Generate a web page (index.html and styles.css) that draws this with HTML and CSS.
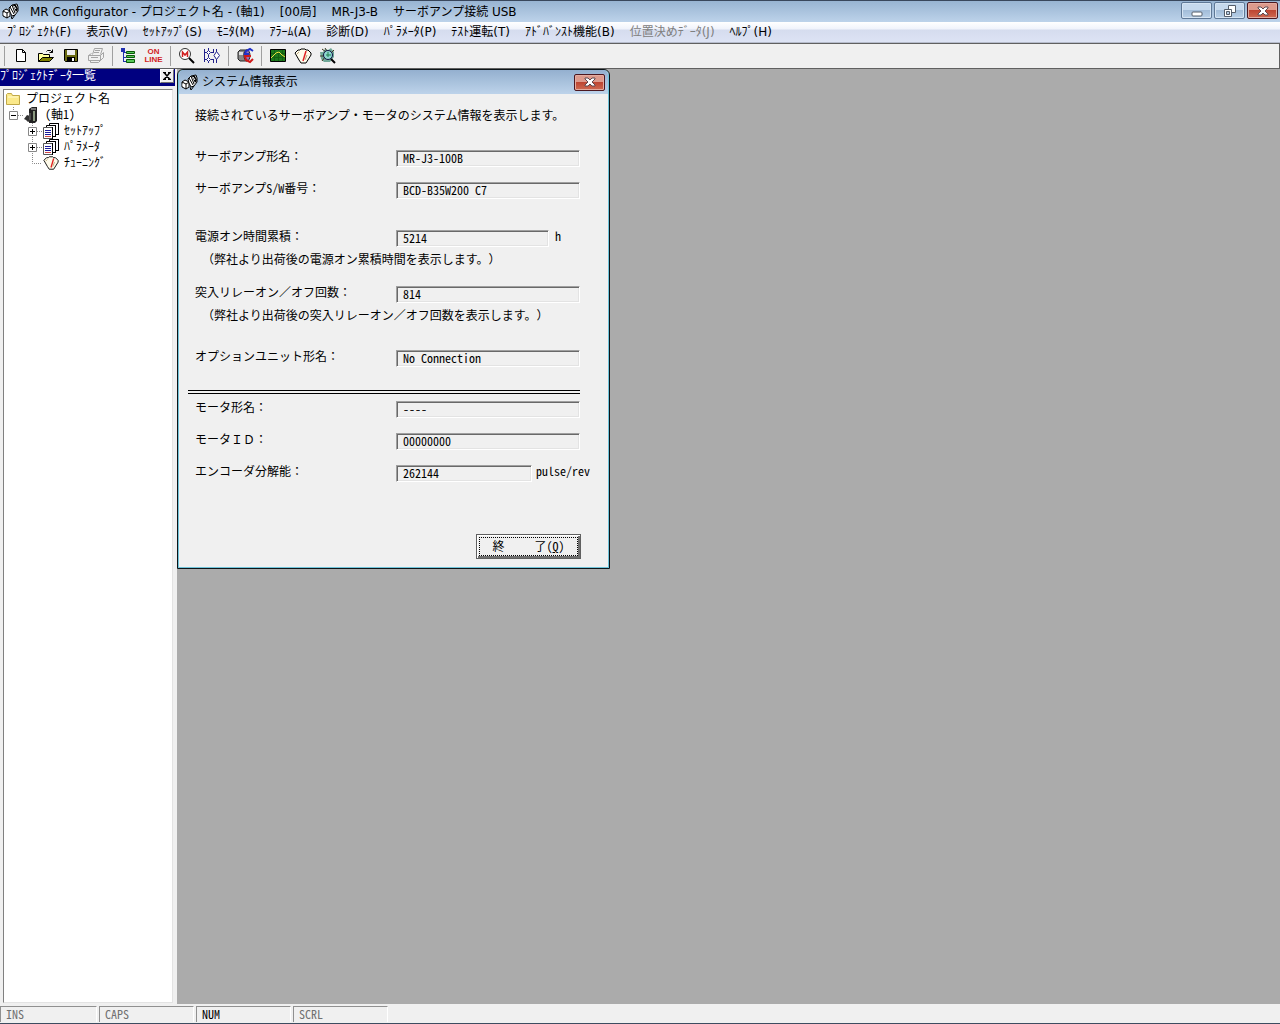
FILE: index.html
```html
<!DOCTYPE html>
<html lang="ja">
<head>
    <meta charset="UTF-8">
    <meta name="viewport" content="width=device-width, initial-scale=1.0">
    <title>MR Configurator</title>
    <link rel="stylesheet" href="styles.css">
</head>
<body>
    <!-- Shared icons -->
    <svg class="defs" width="0" height="0">
        <symbol id="app" viewBox="0 0 17 17">
            <path d="M1 8l3-2 4 2v5l-3 2-4-2z" fill="#fff" stroke="#000"/>
            <path d="M1 8l4 2 3-2M5 10v5" fill="none" stroke="#000"/>
            <path d="M7 5l3-3 5-1 1 3v4l-3 4-3 1-2-4z" fill="#fff" stroke="#000"/>
            <path d="M8 4l4 7M10 2l3 8M13 2l2 6M9 13l1 3 3-4" fill="none" stroke="#000"/>
            <path d="M11 2h3l2 4-2 3z" fill="#000"/>
            <path d="M12 3l2 3M2 10v2" stroke="#fff"/>
        </symbol>
        <symbol id="close" viewBox="0 0 12 10">
            <path d="M1 1h3l2 2 2-2h3v1L8 5l3 3v1H8L6 7 4 9H1V8l3-3-3-3z" fill="#fff" stroke="#5f4a50"/>
        </symbol>
        <symbol id="gauge" viewBox="0 0 18 16">
            <path d="M1 5l3-3h2l1-1h4l1 1h2l3 3v2l-5 8H7L5 12z" fill="#fffbea" stroke="#000"/>
            <path d="M12 3L9 13" stroke="#e02020" stroke-width="1.5"/>
            <path d="M3 6l2-2M13 7l-2 5" stroke="#b9a77a"/>
        </symbol>
        <symbol id="pages" viewBox="0 0 16 16">
            <path d="M6.500.5h9v11h-9z" fill="#fff" stroke="#000"/>
            <path d="M3.500 2.500h9v11h-9z" fill="#fff" stroke="#000"/>
            <path d="M.5 4.500h9v11h-9z" fill="#fff" stroke="#555"/>
            <path d="M9.500 4v12M12.500 2v12M15.500 0v12" stroke="#000"/>
            <path d="M2 7.500h6M2 9.500h6M2 11.500h6" stroke="#1c1c9c"/>
            <path d="M2 13.500h6" stroke="#d04848"/>
        </symbol>
        <symbol id="plus" viewBox="0 0 18 16">
            <path d="M8.500 0v16M13 8.500h5" stroke="#888" stroke-dasharray="1 1"/>
            <path d="M4.500 4.500h8v8h-8z" fill="#fff" stroke="#888"/>
            <path d="M6 8.500h5M8.500 6v5" stroke="#000"/>
        </symbol>
        <symbol id="minus" viewBox="0 0 18 16">
            <path d="M8.500 0v4M13 8.500h5" stroke="#888" stroke-dasharray="1 1"/>
            <path d="M4.500 4.500h8v8h-8z" fill="#fff" stroke="#888"/>
            <path d="M6 8.500h5" stroke="#000"/>
        </symbol>
    </svg>

    <header class="titlebar">
        <svg class="app-icon"><use href="#app"/></svg>
        <h1>
            <span>MR Configurator - プロジェクト名 - (軸1)</span>
            <span>[00局]</span>
            <span>MR-J3-B</span>
            <span>サーボアンプ接続 USB</span>
        </h1>
        <div class="window-buttons">
            <button class="win-btn" aria-label="最小化">
                <svg width="12" height="12"><rect x="1" y="7" width="10" height="4" rx="1" fill="#fff" stroke="#555e6b"/></svg>
            </button>
            <button class="win-btn" aria-label="元に戻す">
                <svg width="12" height="12"><path d="M4.500.5h7v7h-7z" fill="#fff" stroke="#555e6b"/><path d="M.5 4.500h7v7h-7z" fill="#fff" stroke="#555e6b"/><path d="M2.500 6.500h3v3h-3z" fill="#b5cbe2" stroke="#555e6b"/></svg>
            </button>
            <button class="win-btn win-close" aria-label="閉じる">
                <svg width="12" height="10"><use href="#close"/></svg>
            </button>
        </div>
    </header>

    <nav class="menubar">
        <button>ﾌﾟﾛｼﾞｪｸﾄ(F)</button>
        <button>表示(V)</button>
        <button>ｾｯﾄｱｯﾌﾟ(S)</button>
        <button>ﾓﾆﾀ(M)</button>
        <button>ｱﾗｰﾑ(A)</button>
        <button>診断(D)</button>
        <button>ﾊﾟﾗﾒｰﾀ(P)</button>
        <button>ﾃｽﾄ運転(T)</button>
        <button>ｱﾄﾞﾊﾞﾝｽﾄ機能(B)</button>
        <button disabled>位置決めﾃﾞｰﾀ(J)</button>
        <button>ﾍﾙﾌﾟ(H)</button>
    </nav>

    <div class="toolbar">
        <div class="tool-group">
            <button aria-label="新規作成">
                <svg width="18" height="18"><path d="M4.500 2.500h6l3 3v9h-9z" fill="#fff" stroke="#000"/><path d="M10.500 2.500v3h3" fill="none" stroke="#000"/></svg>
            </button>
            <button aria-label="開く">
                <svg width="18" height="18"><path d="M1.500 14.500v-8h4l1 1h6v3" fill="#ffff9c" stroke="#000"/><path d="M1.500 14.500l4-4h11l-4 4z" fill="#808000" stroke="#000"/><path d="M9.500 4.500l1-1h3l2 2M15.500 2.500v3h-3" fill="none" stroke="#000"/></svg>
            </button>
            <button aria-label="保存">
                <svg width="18" height="18"><path d="M2.500 2.500h13v12h-12l-1-1z" fill="#6b6b12" stroke="#000"/><path d="M5 3h8v5H5z" fill="#eee"/><path d="M5 10h8v5H5z" fill="#000"/><path d="M10 11h2v3h-2z" fill="#fff"/></svg>
            </button>
            <button aria-label="印刷" disabled>
                <svg width="18" height="18"><path d="M5.500 7.500l2-6h8l-2 6M1.500 8.500l3-2M1.500 8.500h12v5h-12zM13.500 8.500l3-3v5l-3 3M3.500 13.500v2h8l2-2M8 3.500h5M7 5.500h5M4 10.500h7" fill="none" stroke="#a4a4a4"/></svg>
            </button>
        </div>
        <div class="tool-group">
            <button aria-label="ツリー表示">
                <svg width="18" height="18"><path d="M1 1h4v4H1z" fill="#2030b0"/><path d="M3.500 4v11M3 5.500h3M3 10.500h3M3 14.500h3" fill="none" stroke="#2030b0"/><path d="M6.500 4.500h8v2h-8zM6.500 8.500h8v2h-8zM6.500 12.500h8v3h-8z" fill="#58c858" stroke="#085808"/></svg>
            </button>
            <button class="online">ON<br>LINE</button>
        </div>
        <div class="tool-group">
            <button aria-label="モデル検索">
                <svg width="18" height="18"><circle cx="7" cy="7" r="5.500" fill="#fff" stroke="#333"/><path d="M4.500 10V5L7 8l2.500-3v5" fill="none" stroke="#d02020" stroke-width="1.500"/><path d="M11 11l5 5" stroke="#000" stroke-width="2"/></svg>
            </button>
            <button aria-label="パラメータ設定">
                <svg width="18" height="18"><path d="M1.500 2v13M5.500 1v3M5.500 8v2M5.500 14v2M1 5.500h3M1 12.500h3M8 5.500h2M8 12.500h2M10.500 2v4M10.500 12v4M13.500 2v3M13.500 12v4" fill="none" stroke="#20208c"/><path d="M3.500 5.500l2-2 2 2-2 2zM3.500 12.500l2-2 2 2-2 2zM11 8.500l2.500-4 3 4-3 4z" fill="#fff" stroke="#20208c"/></svg>
            </button>
        </div>
        <div class="tool-group">
            <button aria-label="テスト運転">
                <svg width="18" height="18"><path d="M2 5l2-2h7v11H4l-2-2z" fill="#888" stroke="#222"/><path d="M3 5h4v3H3z" fill="#ddd"/><ellipse cx="11" cy="8.500" rx="3" ry="5.500" fill="#9a70b8" stroke="#222"/><path d="M17 4l-3-2-4 2-1 3h4" fill="none" stroke="#2030c8" stroke-width="2"/><path d="M17 12l-3 3-4-2-1-4h6" fill="none" stroke="#d01818" stroke-width="2"/></svg>
            </button>
        </div>
        <div class="tool-group">
            <button aria-label="グラフ">
                <svg width="18" height="18"><path d="M1.500 2.500h15v12h-15z" fill="#1c781c" stroke="#000"/><path d="M5.500 3v11M9.500 3v11M13.500 3v11M2 6.500h14M2 10.500h14" stroke="#126012"/><path d="M2 11l5-5 3-1 3 3 3 2" fill="none" stroke="#f0e040"/></svg>
            </button>
            <button aria-label="チューニング">
                <svg width="18" height="16"><use href="#gauge"/></svg>
            </button>
            <button aria-label="マシンアナライザ">
                <svg width="18" height="18"><path d="M1 5h3l2-3 3 1 3-2 3 4v5l-4 5H5l-3-3z" fill="#70a898"/><path d="M3 2l4 3M1 9h4M6 1l2 3M3 14l3-4M15 3l-3 3" stroke="#403820"/><circle cx="9" cy="8" r="4.500" fill="#8fd8d0" stroke="#114"/><path d="M9 5v5M7 8h5" stroke="#208050"/><path d="M12 12l4 4" stroke="#000" stroke-width="2"/></svg>
            </button>
        </div>
    </div>

    <main class="workspace">
        <aside class="project-pane">
            <div class="pane-title">
                <h2>ﾌﾟﾛｼﾞｪｸﾄﾃﾞｰﾀ一覧</h2>
                <button class="pane-close" aria-label="閉じる"><svg width="8" height="8"><path d="M0 .5h3M5 .5h3M0 7.500h3M5 7.500h3M1.500 1l5 6M6.500 1l-5 6" stroke="#000" stroke-width="1.500"/></svg></button>
            </div>
            <ul class="tree">
                <li class="root">
                    <svg width="16" height="16"><path d="M1.500 13.500v-10l1-1h4l1 2h7v9z" fill="#fbe98a" stroke="#c0a848"/><path d="M3 6h10" stroke="#fffbd0"/></svg>
                    <span>プロジェクト名</span>
                </li>
                <li>
                    <button class="toggle" aria-label="折りたたむ"><svg width="18" height="16"><use href="#minus"/></svg></button>
                    <svg width="16" height="16"><path d="M5 2l3-2h5v14l-2 2H5z" fill="#222"/><path d="M9 4h2v10H9z" fill="#8a9a80"/><path d="M7 2h5" stroke="#ccc"/><path d="M0 12l3-4 3 1v5l-2 1-2-2z" fill="#333"/><path d="M6 6v7" stroke="#777"/></svg>
                    <span>(軸1)</span>
                </li>
                <li class="child">
                    <button class="toggle" aria-label="展開"><svg width="18" height="16"><use href="#plus"/></svg></button>
                    <svg width="16" height="16"><use href="#pages"/></svg>
                    <span>ｾｯﾄｱｯﾌﾟ</span>
                </li>
                <li class="child">
                    <button class="toggle" aria-label="展開"><svg width="18" height="16"><use href="#plus"/></svg></button>
                    <svg width="16" height="16"><use href="#pages"/></svg>
                    <span>ﾊﾟﾗﾒｰﾀ</span>
                </li>
                <li class="child">
                    <svg class="toggle" width="18" height="16"><path d="M8.500 0v8.500H18" fill="none" stroke="#888" stroke-dasharray="1 1"/></svg>
                    <svg width="16" height="16"><use href="#gauge"/></svg>
                    <span>ﾁｭｰﾆﾝｸﾞ</span>
                </li>
            </ul>
        </aside>

        <section class="mdi">
            <form class="dialog">
                <div class="dialog-title">
                    <svg class="app-icon"><use href="#app"/></svg>
                    <h2>システム情報表示</h2>
                    <button type="button" class="win-btn win-close" aria-label="閉じる"><svg width="12" height="10"><use href="#close"/></svg></button>
                </div>
                <div class="dialog-body">
                    <p class="intro">接続されているサーボアンプ・モータのシステム情報を表示します。</p>

                    <div class="group">
                        <div class="row">
                            <label for="amp">サーボアンプ形名：</label>
                            <div class="field"><input id="amp" value="MR-J3-100B" readonly></div>
                        </div>
                        <div class="row">
                            <label for="sw">サーボアンプ<span class="half">S/W</span>番号：</label>
                            <div class="field"><input id="sw" value="BCD-B35W200 C7" readonly></div>
                        </div>
                    </div>

                    <div class="group">
                        <div class="row">
                            <label for="hours">電源オン時間累積：</label>
                            <div class="field medium"><input id="hours" value="5214" readonly></div>
                            <span class="unit">h</span>
                        </div>
                        <p class="note">（弊社より出荷後の電源オン累積時間を表示します。）</p>
                        <div class="row">
                            <label for="relay">突入リレーオン／オフ回数：</label>
                            <div class="field"><input id="relay" value="814" readonly></div>
                        </div>
                        <p class="note">（弊社より出荷後の突入リレーオン／オフ回数を表示します。）</p>
                    </div>

                    <div class="row option">
                        <label for="option">オプションユニット形名：</label>
                        <div class="field"><input id="option" value="No Connection" readonly></div>
                    </div>

                    <div class="group motor">
                        <div class="row">
                            <label for="motor">モータ形名：</label>
                            <div class="field"><input id="motor" value="----" readonly></div>
                        </div>
                        <div class="row">
                            <label for="motor-id">モータＩＤ：</label>
                            <div class="field"><input id="motor-id" value="00000000" readonly></div>
                        </div>
                        <div class="row">
                            <label for="encoder">エンコーダ分解能：</label>
                            <div class="field short"><input id="encoder" value="262144" readonly></div>
                            <span class="unit">pulse/rev</span>
                        </div>
                    </div>

                    <div class="actions">
                        <button type="button" class="quit"><span>終     了(<u>Q</u>)</span></button>
                    </div>
                </div>
            </form>
        </section>
    </main>

    <footer class="statusbar">
        <span>INS</span>
        <span>CAPS</span>
        <span class="on">NUM</span>
        <span>SCRL</span>
    </footer>
</body>
</html>
```
FILE: styles.css
```css
* {
    box-sizing: border-box;
}

body {
    margin: 0;
    min-height: 100vh;
    display: flex;
    flex-direction: column;
    background: #f0f0f0;
    color: #000;
    font-family: "Noto Sans CJK JP", sans-serif;
    font-size: 12px;
    line-height: 16px;
    text-spacing-trim: space-all;
}

h1, h2, p, ul {
    margin: 0;
    padding: 0;
    font-size: 12px;
    font-weight: normal;
}

button, input {
    font: inherit;
    color: inherit;
    margin: 0;
    padding: 0;
    border: 0;
    background: none;
}

svg {
    display: block;
    flex: none;
}

.defs {
    position: absolute;
}

/* half-width latin, like the system gothic */
.half,
.field input,
.unit,
.tree,
.quit,
.statusbar {
    font-feature-settings: "hwid";
}

.app-icon {
    width: 17px;
    height: 17px;
}

/* Main window title */
.titlebar {
    display: flex;
    align-items: center;
    height: 22px;
    padding: 0 2px;
    border-top: 1px solid #39475c;
    background: linear-gradient(#98b4d2, #bdd3ea);
}

.titlebar h1 {
    display: flex;
    gap: 15px;
    margin-left: 11px;
    white-space: nowrap;
}

.titlebar h1,
.menubar,
.dialog-title h2 {
    font-family: "DejaVu Sans", "Noto Sans CJK JP", sans-serif;
}

.window-buttons {
    display: flex;
    gap: 2px;
    margin-left: auto;
    align-self: flex-start;
    padding-top: 1px;
}

.win-btn {
    display: flex;
    align-items: center;
    justify-content: center;
    width: 31px;
    height: 17px;
    border: 1px solid #5f7896;
    border-radius: 2px;
    background: linear-gradient(#c6d9ed 45%, #a3bdd9 50%, #b9d0e8);
    box-shadow: inset 0 0 0 1px #d5e4f3;
}

.win-close {
    border-color: #4c1820;
    background: linear-gradient(#dd9a8c 45%, #bd4632 50%, #cf6a52);
    box-shadow: inset 0 0 0 1px #e3aca0;
}

/* Menu */
.menubar {
    display: flex;
    flex-wrap: wrap;
    gap: 0 15px;
    min-height: 21px;
    padding: 0 7px;
    background: linear-gradient(#fff 0, #f0f3fb 35%, #d5dcee 40%, #dde3f4);
    border-bottom: 1px solid #b6bccc;
}

.menubar button:disabled {
    color: #808080;
}

/* Toolbar */
.toolbar {
    display: flex;
    height: 26px;
    padding-left: 3px;
    border: 1px solid #606060;
    border-left: 0;
    background: #f0f0f0;
}

.tool-group {
    display: flex;
    padding-left: 3px;
    margin: 2px 3px 2px 1px;
    border-left: 1px solid #a0a0a0;
}

.tool-group button {
    display: flex;
    align-items: center;
    justify-content: center;
    width: 25px;
}

.tool-group .online {
    display: block;
    color: #d01c24;
    font: bold 8px/8px "Liberation Sans", sans-serif;
}

/* Work area */
.workspace {
    flex: 1;
    display: flex;
    background: #ababab;
}

.project-pane {
    flex: none;
    display: flex;
    flex-direction: column;
    width: 177px;
    padding-right: 2px;
    background: #f0f0f0;
}

.pane-title {
    display: flex;
    justify-content: space-between;
    height: 17px;
    padding-right: 1px;
    background: #000080;
    color: #fff;
    line-height: 12px;
}

.pane-title h2 {
    white-space: nowrap;
}

.pane-close {
    display: flex;
    align-items: center;
    justify-content: center;
    width: 14px;
    height: 14px;
    background: #f0f0f0;
    border: 1px solid #fff;
    border-right-color: #707070;
    border-bottom-color: #707070;
}

.tree {
    flex: 1;
    margin: 3px 2px 1px 3px;
    padding-left: 1px;
    list-style: none;
    background: #fff;
    border: 1px solid #808080;
    border-right-color: #e3e3e3;
    border-bottom-color: #e3e3e3;
    line-height: 14px;
}

.tree li {
    display: flex;
    gap: 5px;
    height: 16px;
}

.tree li.root {
    margin-top: 1px;
}

.tree .toggle {
    margin-right: -4px;
}

.tree .child {
    padding-left: 19px;
}

/* System information dialog */
.dialog {
    width: 433px;
    background: #f0f0f0;
    border: 1px solid #0c1418;
    border-radius: 6px 6px 0 0;
    box-shadow: inset 0 0 0 1px #6fc4da;
}

.dialog-title {
    display: flex;
    align-items: center;
    gap: 4px;
    height: 24px;
    margin: 0 1px;
    padding: 0 3px 0 2px;
    border-radius: 5px 5px 0 0;
    background: linear-gradient(#94b0cf, #bdd3ea);
}

.dialog-title .win-btn {
    margin-left: auto;
}

.dialog-body {
    padding: 13px 28px 9px 17px;
}

.intro {
    margin-bottom: 27px;
}

.group {
    display: flex;
    flex-direction: column;
    gap: 16px;
    margin-bottom: 32px;
}

.row {
    display: flex;
    align-items: flex-start;
    height: 16px;
    line-height: 12px;
    white-space: nowrap;
}

.row label {
    flex: none;
    width: 201px;
}

/* sunken read-only box */
.field {
    flex: none;
    width: 184px;
    height: 17px;
    border: 1px solid #a0a0a0;
    border-right-color: #fff;
    border-bottom-color: #fff;
    box-shadow: inset 1px 1px #696969, inset -1px -1px #e3e3e3;
}

.field input {
    display: block;
    width: 100%;
    height: 18px;
    margin-top: -3px;
    padding-left: 6px;
    outline: 0;
}

.medium {
    width: 153px;
}

.short {
    width: 136px;
}

.unit {
    margin-left: 4px;
}

.medium + .unit {
    margin-left: 6px;
}

.note {
    margin: -11px 0 3px 7px;
}

.group .note:last-child {
    margin-bottom: -5px;
}

.option {
    margin-bottom: 24px;
}

.motor {
    position: relative;
    padding-top: 11px;
    margin-bottom: 53px;
}

/* double rule above the motor rows, wider than the labels */
.motor::before {
    content: "";
    position: absolute;
    top: 0;
    left: -7px;
    right: 1px;
    height: 2px;
    border: solid #000;
    border-width: 1px 0;
}

.actions {
    display: flex;
    justify-content: flex-end;
}

.quit {
    width: 105px;
    height: 25px;
    padding: 2px;
    border: 1px solid #606060;
    box-shadow: inset 1px 1px #fff, inset -2px -2px #707070;
}

.quit span {
    display: block;
    height: 19px;
    border: 1px dotted #000;
    line-height: 15px;
    white-space: pre;
}

/* Key state indicators */
.statusbar {
    display: flex;
    gap: 2px;
    height: 20px;
    padding: 2px 0 1px;
    border-bottom: 1px solid #3c4c60;
    line-height: 14px;
}

.statusbar span {
    width: 95px;
    padding-left: 5px;
    border: 1px solid #909090;
    border-right-color: #fff;
    border-bottom: 0;
    color: #707070;
}

.statusbar span:first-child {
    width: 97px;
}

.statusbar .on {
    color: #000;
}
```
